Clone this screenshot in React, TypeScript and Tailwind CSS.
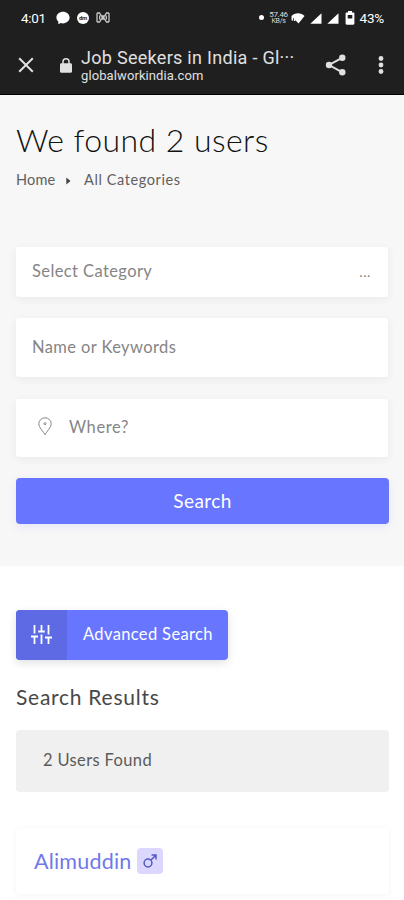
import { ReactNode } from "react";

type FieldProps = {
  children: ReactNode;
  className?: string;
};

const StatusBar = () => (
  <div className="flex h-[37px] items-center pl-[21px] pr-5 text-white" aria-label="Status bar">
    <span className="w-[26px] whitespace-nowrap text-[13.5px] leading-none tracking-[-0.3px]">4:01</span>
    <svg className="-mt-[2px] ml-[9px]" width="14" height="14" viewBox="0 0 14 14" fill="currentColor" aria-hidden="true">
      <path d="M7 .8c3.700 0 6.600 2.600 6.600 5.800S10.700 12.400 7 12.400c-.8 0-1.500-.1-2.200-.3L2.300 13.200l.1-2.500C1.200 9.700.4 8.200.4 6.600.4 3.400 3.300.8 7 .8Z" />
    </svg>
    <span className="-mt-px ml-[7px] flex h-3 w-3 items-center justify-center rounded-full bg-white text-[6px] font-bold leading-none tracking-[-0.4px] text-[#1f1f1f]">
      dm
    </span>
    <svg className="-mt-[2px] ml-[7px]" width="14" height="11" viewBox="0 0 14 11" fill="none" stroke="#c8c8c8" strokeWidth="1.300" aria-hidden="true">
      <path d="M1 1v9M13 1v9M1 1h2.500L5.500 4h3l2-3H13M1 10h2.500l2-3h3l2 3H13M3.700 3.500v4M10.300 3.500v4M5.500 5.500h3" />
    </svg>
    <div className="ml-auto flex items-center">
      <span className="-mt-[2px] h-[5px] w-[5px] rounded-full bg-white" />
      <span className="-mt-px ml-[5px] flex w-[20px] flex-col items-center whitespace-nowrap text-[8px] leading-[6.5px] tracking-[-0.3px] text-[#dedede]">
        <span>57.46</span>
        <span className="text-[7px]">KB/s</span>
      </span>
      <svg className="-mt-[2px] ml-[2px]" width="14" height="12" viewBox="0 0 14 12" fill="currentColor" aria-hidden="true">
        <path d="M.5 4C3.800.2 10.200.2 13.500 4L7.500 11.500Z" />
        <path d="M1.300 4v4.500M3.600 5v4" stroke="currentColor" strokeWidth="1.500" />
      </svg>
      <svg className="-mt-px ml-[5px]" width="12" height="11" viewBox="0 0 12 11" fill="currentColor" aria-hidden="true">
        <path d="M11.500.3v10.500H.3Z" />
      </svg>
      <svg className="-mt-px ml-[5px]" width="12" height="11" viewBox="0 0 12 11" fill="currentColor" aria-hidden="true">
        <path d="M11.500.3v10.500H.3Z" />
      </svg>
      <svg className="-mt-px ml-[6px]" width="10" height="14" viewBox="0 0 10 14" aria-hidden="true">
        <path fill="currentColor" fillRule="evenodd" d="M3 0h4v1.500h1.200c.7 0 1.200.5 1.200 1.200v9.800c0 .7-.5 1.200-1.200 1.200H1.800c-.7 0-1.200-.5-1.200-1.200V2.700c0-.7.5-1.200 1.200-1.200H3ZM2.700 4v3.500h4.600V4Z" />
      </svg>
      <span className="ml-[5px] whitespace-nowrap text-[13.5px] leading-none tracking-[-0.2px]">43%</span>
    </div>
  </div>
);

const BrowserBar = () => (
  <div className="flex h-[58px] items-center border-b border-black pb-px text-[#e0e0e0]">
    <svg className="ml-[18px]" width="16" height="16" viewBox="0 0 16 16" fill="none" stroke="currentColor" strokeWidth="2" aria-label="Close">
      <path d="M1.200 1.200 14.800 14.800M14.800 1.200 1.200 14.800" />
    </svg>
    <svg className="ml-[26px]" width="12" height="15" viewBox="0 0 12 15" aria-hidden="true">
      <path d="M3 6V3.800a3 3 0 0 1 6 0V6" fill="none" stroke="currentColor" strokeWidth="1.500" />
      <rect x="0" y="5.300" width="12" height="9.500" rx="1.400" fill="currentColor" />
    </svg>
    <div className="ml-[9px] w-[215px] whitespace-nowrap pt-px">
      <p className="text-[18px] leading-[21px] tracking-[0.29px]">Job Seekers in India - Gl···</p>
      <p className="text-[13px] leading-[16px] tracking-[0.1px]">globalworkindia.com</p>
    </div>
    <svg className="ml-[29px]" width="22" height="22" viewBox="0 0 22 22" fill="currentColor" aria-label="Share">
      <path d="M17 3.800 4 11l13 7.200" fill="none" stroke="currentColor" strokeWidth="2" />
      <circle cx="17.300" cy="3.700" r="3.200" />
      <circle cx="4" cy="11" r="3.200" />
      <circle cx="17.300" cy="18.300" r="3.200" />
    </svg>
    <svg className="ml-[31px]" width="6" height="18" viewBox="0 0 6 18" fill="currentColor" aria-label="More">
      <circle cx="3" cy="2.500" r="2.400" />
      <circle cx="3" cy="9" r="2.400" />
      <circle cx="3" cy="15.500" r="2.400" />
    </svg>
  </div>
);

const Field = ({ children, className }: FieldProps) => (
  <div
    className={`flex w-[372px] items-center rounded-[3px] bg-white px-4 text-[16.5px] text-[#858585] shadow-[0_2px_10px_rgba(0,0,0,0.06)] ${className ?? ""}`}
  >
    {children}
  </div>
);

const SearchPanel = () => (
  <section className="h-[471px] bg-[#f7f7f7] px-4 pt-[25px]">
    <h1 className="whitespace-nowrap text-[32px] font-light leading-10 tracking-[0.43px] text-[#111]">
      We found 2 users
    </h1>
    <nav className="mt-[10px] flex h-5 items-center whitespace-nowrap text-[14.5px] tracking-[0.2px] text-[#606060]">
      <span className="w-[50px]">Home</span>
      <svg className="mt-px" width="5" height="8" viewBox="0 0 5 8" fill="#444" aria-hidden="true">
        <path d="M.3.500 4.500 4 .3 7.500Z" />
      </svg>
      <span className="ml-[13px] tracking-[0.6px]">All Categories</span>
    </nav>
    <div className="mt-[57px] flex flex-col">
      <Field className="h-[50px] justify-between pb-px">
        <span className="tracking-[0.4px]">Select Category</span>
        <span className="mr-px text-[14px] tracking-[0.6px]">...</span>
      </Field>
      <Field className="mt-[21px] h-[59px]">
        <span className="tracking-[0.4px]">Name or Keywords</span>
      </Field>
      <Field className="mt-[22px] h-[58px] pb-px">
        <svg className="-mt-[3px] ml-[6px]" width="14" height="19" viewBox="0 0 14 19" fill="none" stroke="currentColor" aria-hidden="true">
          <path d="M7 17.800C5.500 14.500.8 10.500.8 6.700a6.200 5.900 0 0 1 12.400 0c0 3.800-4.700 7.800-6.200 11.100Z" />
          <circle cx="7" cy="6.700" r="1" />
        </svg>
        <span className="ml-[17px] tracking-[0.6px]">Where?</span>
      </Field>
      <button className="mt-[21px] h-[46px] w-[373px] rounded-[4px] bg-[#6875ff] text-[19px] tracking-[0.4px] text-white shadow-[0_3px_9px_rgba(104,117,255,0.12)]">
        Search
      </button>
    </div>
  </section>
);

const Results = () => (
  <section className="h-[334px] overflow-hidden bg-white px-4 pt-[43.5px]">
    <button className="flex h-[50px] w-[212px] overflow-hidden rounded-[4px] bg-[#6875ff] text-white shadow-[0_3px_8px_rgba(0,0,0,0.12)]">
      <span className="flex h-full w-[51px] items-center justify-center bg-[#5e69e4] pb-px">
        <svg width="21" height="19" viewBox="0 0 21 19" fill="none" stroke="currentColor" strokeWidth="1.800" aria-hidden="true">
          <path d="M3.500 0v8.500M0 11.500h7M3.500 11.500V19M10.500 0v6M7.200 6.500h6.600M10.500 9.500V19M17.500 0v9.500M14 12.500h7M17.500 12.500V19" />
        </svg>
      </span>
      <span className="flex h-full items-center whitespace-nowrap pl-4 text-[16.5px] tracking-[0.36px]">Advanced Search</span>
    </button>
    <h2 className="mt-[22.5px] whitespace-nowrap text-[21px] leading-[30px] tracking-[0.74px] text-[#484848]">Search Results</h2>
    <div className="mt-[18px] flex h-[62px] w-[373px] items-center rounded-[4px] bg-[#f0f0f0] px-[27px] pb-[2px] text-[16.5px] tracking-[0.36px] text-[#5b5b5b]">
      2 Users Found
    </div>
    <article className="mt-[36px] flex h-[66px] w-[373px] items-center rounded-[4px] bg-white px-[18px] shadow-[0_1px_5px_rgba(0,0,0,0.05)]">
      <h3 className="w-[103px] whitespace-nowrap text-[21.5px] tracking-[0.2px] text-[#7078ea]">Alimuddin</h3>
      <span className="flex h-[26px] w-[26px] items-center justify-center rounded-[4px] bg-[#dcd7ff]">
        <svg width="14" height="14" viewBox="0 0 14 14" fill="none" stroke="#555ac2" strokeWidth="1.500" aria-label="Male">
          <circle cx="5" cy="9" r="3.900" />
          <path d="M7.800 6.200 13 1M8.500 1H13v4.500" />
        </svg>
      </span>
    </article>
  </section>
);

const App = () => (
  <main className="h-[900px] w-[404px] overflow-hidden font-['Lato',sans-serif]">
    <header className="h-[95px] bg-[#1f1f1f] font-['Roboto',sans-serif]">
      <StatusBar />
      <BrowserBar />
    </header>
    <SearchPanel />
    <Results />
  </main>
);

export default App;
